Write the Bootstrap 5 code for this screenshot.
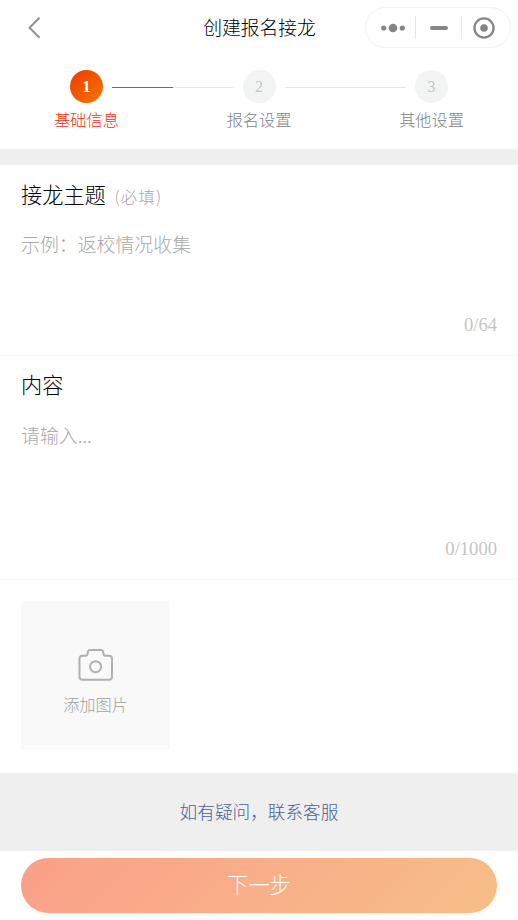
<!DOCTYPE html>
<html lang="zh-CN">
<head>
<meta charset="utf-8">
<meta name="viewport" content="width=device-width, initial-scale=1">
<title>创建报名接龙</title>
<link href="https://cdn.jsdelivr.net/npm/bootstrap@5.3.0/dist/css/bootstrap.min.css" rel="stylesheet">
<style>
body{font-family:"Noto Sans CJK SC",sans-serif;font-weight:300;color:#000;background:#fff;line-height:1;height:920px;overflow:hidden}
.num{font-family:"Liberation Serif",serif;font-weight:400}
.topbar{height:55px;display:grid;grid-template-columns:1fr auto 1fr;padding:0 7px 0 28px}
.topbar h1{font-size:18.8px;font-weight:300;margin:0 0 1px -20px}
.capsule{width:146px;height:41px;border:1px solid #f1f2f2;border-radius:21px}
.capsule>span{width:45px;height:23px}
.capsule>span:nth-child(2){width:46px}
.capsule>span+span{border-left:1px solid #e5e5e5}
.steps{height:94px;padding:15px 54px 0}
.step{width:65px}
.disc{width:33px;height:33px;background:#f2f4f4;color:#c4c4c4;font-size:16px}
.disc.on{background:linear-gradient(135deg,#f13a02,#f27800);color:#fff;font-weight:700;box-shadow:0 1px 3px #0001}
.caption{font-size:16.2px;color:#808289;margin-top:8px;white-space:nowrap}
.on+.caption{color:#f23000}
.track{height:1px;background:#e5e5e5;margin:17px -7px 0;width:121px;flex:none}
.track i{display:block;height:1px;width:61px;background:#e9400f}
.band{height:16px;background:#efefef}
.field{padding:14px 21px 0;border-bottom:1px solid #f7f7f7}
.f1{height:191px}.f2{height:224px}
.field h2{font-size:21.2px;font-weight:300;line-height:30px;height:30px;margin:0}
.f2 h2{margin-top:-1px;margin-bottom:1px}
.field h2 small{font-size:16.4px;line-height:16px;color:#a8a8a8;margin-left:4px;letter-spacing:1.2px}
.hint{font-size:18.9px;line-height:28px;color:#a9a9a9;margin-top:21px}
.count{font-size:18.6px;line-height:22px;color:#c5c5c5;margin-bottom:19px}
.uploads{height:193px;padding:21px}
.tile{width:149px;height:149px;background:#f9f9f9;color:#a0a0a0;font-size:16.2px;padding-top:47px}
.tile span{margin-top:14px}
.help{height:78px;background:#efefef;font-size:17.65px}
.help a{color:#4b6190;text-decoration:none}
.next{margin:7px 21px 0;height:55px;width:476px;border:0;padding:0 0 4px;border-radius:28px;background:linear-gradient(135deg,#faa088,#f7be88);color:#fff;font-size:21.2px;font-weight:300;box-shadow:0 2px 5px #0000000a}
</style>
<script src="https://cdn.jsdelivr.net/npm/bootstrap@5.3.0/dist/js/bootstrap.bundle.min.js"></script>
</head>
<body>
<header class="topbar align-items-center">
  <svg width="14" height="22" viewBox="0 0 14 22" fill="none" stroke="#929292" stroke-width="2"><path d="M11.500 .7 1.500 10.700l10 10"/></svg>
  <h1>创建报名接龙</h1>
  <div class="capsule d-flex align-items-center justify-content-center ms-auto">
    <span class="d-flex align-items-center justify-content-center"><svg width="24" height="10" fill="#858585"><circle cx="2.7" cy="5" r="2.6"/><circle cx="12" cy="5" r="4.3"/><circle cx="21.3" cy="5" r="2.6"/></svg></span>
    <span class="d-flex align-items-center justify-content-center"><svg width="18" height="4"><rect width="18" height="4" rx="2" fill="#858585"/></svg></span>
    <span class="d-flex align-items-center justify-content-center"><svg width="22" height="22" fill="none" stroke="#858585" stroke-width="2.3"><circle cx="11" cy="11" r="9.6"/><circle cx="11" cy="11" r="3.8" fill="#858585" stroke="none"/></svg></span>
  </div>
</header>
<section class="steps d-flex justify-content-between">
  <div class="step d-flex flex-column align-items-center"><div class="disc on num rounded-circle d-flex align-items-center justify-content-center">1</div><div class="caption">基础信息</div></div>
  <div class="track"><i></i></div>
  <div class="step d-flex flex-column align-items-center"><div class="disc num rounded-circle d-flex align-items-center justify-content-center">2</div><div class="caption">报名设置</div></div>
  <div class="track"></div>
  <div class="step d-flex flex-column align-items-center"><div class="disc num rounded-circle d-flex align-items-center justify-content-center">3</div><div class="caption">其他设置</div></div>
</section>
<div class="band"></div>
<section class="field f1 d-flex flex-column">
  <h2>接龙主题 <small>(必填)</small></h2>
  <div class="hint">示例：返校情况收集</div>
  <div class="count num mt-auto text-end">0/64</div>
</section>
<section class="field f2 d-flex flex-column">
  <h2>内容</h2>
  <div class="hint">请输入...</div>
  <div class="count num mt-auto text-end">0/1000</div>
</section>
<section class="uploads">
  <div class="tile d-flex flex-column align-items-center">
    <svg width="36" height="34" viewBox="0 0 36 34" fill="none" stroke="#b0b0b0" stroke-width="2" stroke-linejoin="round"><path d="M4.500 7.800h3.300q1.200 0 1.500-1.200l.8-3.400Q10.500 2 11.700 2h11.600q1.200 0 1.600 1.200l.8 3.400q.3 1.200 1.500 1.200h3.800q3 0 3 3V29q0 2.700-3 2.700H4.500q-3 0-3-2.700V10.800q0-3 3-3z"/><circle cx="17.600" cy="18.700" r="5.500"/></svg>
    <span>添加图片</span>
  </div>
</section>
<div class="help d-flex align-items-center justify-content-center"><a href="#">如有疑问，联系客服</a></div>
<button class="next d-block" type="button">下一步</button>
</body>
</html>
